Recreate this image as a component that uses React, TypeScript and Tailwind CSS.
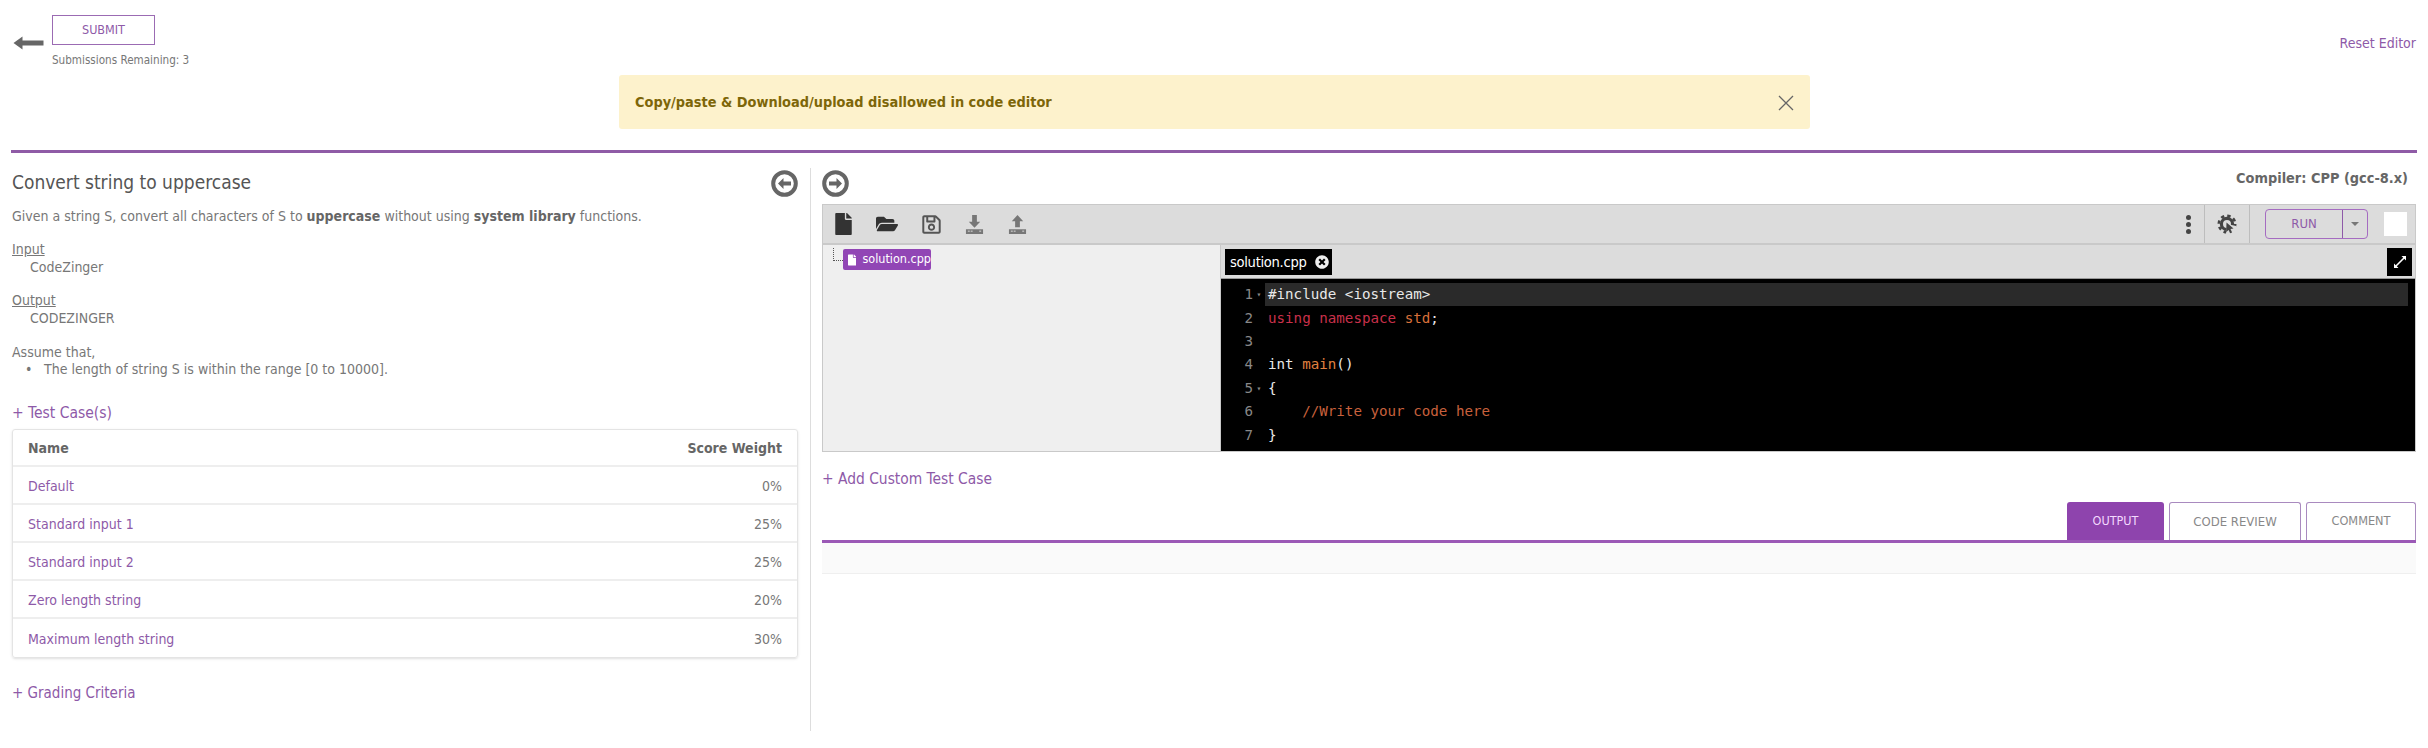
import React from "react";
import { FaFile, FaFolderOpen, FaRegSave, FaTimesCircle } from "react-icons/fa";

const font = { fontFamily: '"DejaVu Sans Condensed", "DejaVu Sans", sans-serif', fontStretch: "condensed" } as React.CSSProperties;

function Arrow({ dir, className }: { dir: "left" | "right"; className?: string }) {
  return (
    <svg viewBox="0 0 27 27" className={className}>
      <circle cx="13.5" cy="13.5" r="11.3" fill="none" stroke="#666" strokeWidth="4" />
      <path d={dir === "left" ? "M7 13.5l5.5-5.5v3.4h7.5v4.2h-7.5V19z" : "M20 13.5L14.5 8v3.4H7v4.2h7.5V19z"} fill="#666" />
    </svg>
  );
}

function TrayIcon({ up }: { up?: boolean }) {
  return (
    <svg viewBox="0 0 20 22" className="w-[19px] h-[21px]">
      <path d={up ? "M10 1l6 6.5h-3.5V14h-5V7.5H4z" : "M7.5 1h5v7H16l-6 6.5L4 8h3.5z"} fill="#777" />
      <rect x="1" y="16" width="18" height="5" fill="#777" />
      <rect x="3" y="17.5" width="2" height="1" fill="#ddd" />
      <rect x="6" y="17.5" width="2" height="1" fill="#ddd" />
      <rect x="15" y="17.5" width="2" height="1" fill="#ddd" />
    </svg>
  );
}

function GearIcon() {
  return (
    <svg viewBox="0 0 20 20" className="w-[20px] h-[20px]">
      <circle cx="10" cy="10" r="5.6" fill="none" stroke="#444" strokeWidth="3.2" />
      <circle cx="10" cy="10" r="8.2" fill="none" stroke="#444" strokeWidth="2.6" strokeDasharray="3.4 3.04" />
      <path d="M10 10l9 2v8H9z" fill="#dcdcdc" />
      <path d="M9.5 8.5l7 6-3 .6 1.6 3.4-2 .8-1.5-3.4-2.4 2z" fill="#444" />
    </svg>
  );
}

const rows: [string, string][] = [
  ["Default", "0%"],
  ["Standard input 1", "25%"],
  ["Standard input 2", "25%"],
  ["Zero length string", "20%"],
  ["Maximum length string", "30%"],
];

const code: React.ReactNode[] = [
  <span className="text-[#e8e8e8]">#include &lt;iostream&gt;</span>,
  <>
    <span className="text-[#c9304a]">using namespace </span>
    <span className="text-[#d9703a]">std</span>
    <span className="text-[#e8e8e8]">;</span>
  </>,
  "",
  <>
    <span className="text-[#e8e8e8]">int </span>
    <span className="text-[#e0803f]">main</span>
    <span className="text-[#e8e8e8]">()</span>
  </>,
  <span className="text-[#e8e8e8]">{"{"}</span>,
  <span className="text-[#c8603c]">{"    //Write your code here"}</span>,
  <span className="text-[#e8e8e8]">{"}"}</span>,
];

export default function App() {
  return (
    <div className="w-[2428px] h-[748px] bg-white text-[#777] text-[14px] overflow-hidden" style={font}>
      {/* top bar */}
      <div className="h-[75px] pl-[13px] pr-[12px] pt-[15px] flex items-start">
        <svg viewBox="0 0 30 14" className="w-[31px] h-[14px] mt-[21px] mr-[8px]">
          <path d="M0 7l9-6.5V4.5h21v5H9v4z" fill="#666" />
        </svg>
        <div>
          <button className="w-[103px] h-[30px] border border-[#9b6bb3] text-[#8e5aa8] text-[12.5px]">SUBMIT</button>
          <div className="text-[11.6px] mt-[7px] leading-[16px] text-[#777]">Submissions Remaining: 3</div>
        </div>
        <div className="ml-auto mt-[19px] text-[#8e5aa8] leading-[18px]">Reset Editor</div>
      </div>

      {/* alert */}
      <div className="ml-[619px] w-[1191px] h-[54px] bg-[#fdf2cc] rounded-[3px] flex items-center justify-between pl-[16px] pr-[16px] pt-[1px] text-[#7d6608] font-bold text-[14.4px]">
        <span>Copy/paste &amp; Download/upload disallowed in code editor</span>
        <svg viewBox="0 0 16 16" className="w-[16px] h-[16px]">
          <path d="M1 1l14 14M15 1L1 15" stroke="#666" strokeWidth="1.3" fill="none" />
        </svg>
      </div>

      {/* rule */}
      <div className="mx-[11px] mt-[21px] h-[3px] bg-[#8f5ba6]" />

      <div className="flex h-[578px] pt-[15px]">
        {/* left column */}
        <div className="w-[811px] pl-[12px] pr-[12px] border-r border-[#ddd] shrink-0 h-[563px]">
          <div className="flex items-center justify-between h-[30px]">
            <h1 className="text-[19px] text-[#555] leading-[26px] mb-[3px]">Convert string to uppercase</h1>
            <Arrow dir="left" className="w-[27px] h-[27px] mt-[1px]" />
          </div>
          <p className="mt-[9px] leading-[18px]">
            Given a string S, convert all characters of S to <b className="text-[#666]">uppercase</b> without using{" "}
            <b className="text-[#666]">system library</b> functions.
          </p>
          <div className="mt-[15px] leading-[18px]">
            <div className="underline">Input</div>
            <div className="pl-[18px]">CodeZinger</div>
          </div>
          <div className="mt-[15px] leading-[18px]">
            <div className="underline">Output</div>
            <div className="pl-[18px]">CODEZINGER</div>
          </div>
          <div className="mt-[17px] leading-[17px]">
            <div>Assume that,</div>
            <div className="flex">
              <span className="w-[32px] pl-[13px]">•</span>
              <span>The length of string S is within the range [0 to 10000].</span>
            </div>
          </div>
          <div className="mt-[25px] text-[15.5px] leading-[20px] text-[#8e5aa8]">+ Test Case(s)</div>
          <div className="mt-[6px] border border-[#e4e4e4] rounded-[3px] shadow-sm">
            <div className="h-[37px] flex items-center justify-between px-[15px] pt-[2px] font-bold text-[#666] border-b-2 border-[#eee]">
              <span>Name</span>
              <span>Score Weight</span>
            </div>
            {rows.map(([n, w], i) => (
              <div
                key={n}
                className={
                  i < rows.length - 1
                    ? "h-[38px] flex items-center justify-between px-[15px] pt-[2px] border-b-2 border-[#eee]"
                    : "h-[38px] flex items-center justify-between px-[15px] pt-[2px]"
                }
              >
                <span className="text-[#8e5aa8]">{n}</span>
                <span>{w}</span>
              </div>
            ))}
          </div>
          <div className="mt-[25px] text-[15px] leading-[20px] text-[#8e5aa8]">+ Grading Criteria</div>
        </div>

        {/* right column */}
        <div className="flex-1 pl-[11px] pr-[12px] min-w-0">
          <div className="flex items-center justify-between h-[30px]">
            <Arrow dir="right" className="w-[27px] h-[27px] mt-[1px]" />
            <span className="font-bold text-[14.4px] text-[#666] pr-[8px] -mt-[8px]">Compiler: CPP (gcc-8.x)</span>
          </div>
          {/* editor */}
          <div className="mt-[6px] border border-[#c9c9c9] h-[248px] flex flex-col">
            <div className="h-[40px] bg-[#dcdcdc] border-b-2 border-[#c9c9c9] flex items-center shrink-0">
              <div className="flex items-center pl-[12px] gap-[24px]">
                <FaFile className="w-[17px] h-[22px] text-[#333]" />
                <FaFolderOpen className="w-[22px] h-[20px] text-[#333]" />
                <FaRegSave className="w-[19px] h-[21px] text-[#555]" />
                <TrayIcon />
                <TrayIcon up />
              </div>
              <div className="ml-auto flex items-center h-full">
                <div className="flex flex-col gap-[2px] pr-[13px]">
                  <i className="w-[5px] h-[5px] rounded-full bg-[#444]" />
                  <i className="w-[5px] h-[5px] rounded-full bg-[#444]" />
                  <i className="w-[5px] h-[5px] rounded-full bg-[#444]" />
                </div>
                <div className="w-[46px] h-full border-x border-[#bdbdbd] flex items-center justify-center">
                  <GearIcon />
                </div>
                <div className="ml-[15px] w-[103px] h-[30px] border border-[#a56cc1] rounded-[4px] flex text-[#8e5aa8] text-[13px]">
                  <div className="w-[77px] flex items-center justify-center border-r border-[#8e5aa8]">RUN</div>
                  <div className="flex-1 flex items-center justify-center">
                    <i className="w-0 h-0 border-x-[4px] border-x-transparent border-t-[4px] border-t-[#777]" />
                  </div>
                </div>
                <div className="ml-[16px] mr-[8px] w-[23px] h-[24px] bg-white" />
              </div>
            </div>
            <div className="flex-1 flex min-h-0">
              <div className="w-[398px] bg-[#efefef] relative pt-[4px] pl-[20px] border-r border-[#c9c9c9]">
                <i className="absolute left-[10px] top-[3px] w-[10px] h-[13px] border-l border-b border-dotted border-[#555]" />
                <div className="w-[88px] h-[21px] bg-[#9146b5] rounded-[2px] text-white text-[12.5px] flex items-center pl-[5px] gap-[6px]">
                  <FaFile className="w-[12px] h-[16px]" />
                  <span>solution.cpp</span>
                </div>
              </div>
              <div className="flex-1 flex flex-col min-w-0">
                <div className="h-[34px] bg-[#dcdcdc] border-b border-[#999] flex items-center justify-between pl-[4px] pr-[3px] shrink-0">
                  <div className="w-[107px] h-[26px] bg-black text-white text-[14.6px] flex items-center pl-[5px] gap-[9px]">
                    <span className="tracking-[-0.3px]">solution.cpp</span>
                    <FaTimesCircle className="w-[14px] h-[14px] text-[#eee]" />
                  </div>
                  <div className="w-[25px] h-[28px] bg-black flex items-center justify-center">
                    <svg viewBox="0 0 14 14" className="w-[14px] h-[14px]">
                      <path d="M8.5 1H13v4.5L11.3 3.8 3.8 11.3 5.5 13H1V8.5l1.7 1.7 7.5-7.5z" fill="#fff" />
                    </svg>
                  </div>
                </div>
                <div className="flex-1 bg-black pt-[4px] pr-[7px] overflow-hidden" style={{ fontFamily: '"DejaVu Sans Mono", monospace' }}>
                  {code.map((c, i) => (
                    <div key={i} className="flex h-[23.4px] items-center text-[14.2px] leading-[23px]">
                      <span className="w-[32px] text-right text-[#888] shrink-0">{i + 1}</span>
                      <span className="w-[12px] shrink-0 text-center text-[8px] text-[#888]">{i === 0 || i === 4 ? "▾" : ""}</span>
                      <pre
                        className={i === 0 ? "flex-1 h-full pl-[3px] bg-[#2a2a2a]" : "flex-1 pl-[3px]"}
                        style={{ fontFamily: "inherit" }}
                      >
                        {c}
                      </pre>
                    </div>
                  ))}
                </div>
              </div>
            </div>
          </div>

          <div className="mt-[17px] text-[15.4px] leading-[20px] text-[#8e5aa8]">+ Add Custom Test Case</div>

          {/* tabs */}
          <div className="mt-[13px] flex justify-end gap-[5px] border-b-[3px] border-[#9b59b6] h-[41px]">
            <div className="w-[97px] bg-[#8e44ad] text-[#f3d9ff] text-[12.5px] rounded-t-[3px] flex items-center justify-center font-medium">OUTPUT</div>
            <div className="w-[132px] border border-b-0 border-[#a98abf] rounded-t-[3px] text-[13px] text-[#888] flex items-center justify-center">CODE REVIEW</div>
            <div className="w-[110px] border border-b-0 border-[#a98abf] rounded-t-[3px] text-[12.6px] text-[#888] flex items-center justify-center">COMMENT</div>
          </div>
          <div className="h-[31px] bg-[#fafafa] border-b border-[#efefef]" />
        </div>
      </div>
    </div>
  );
}
